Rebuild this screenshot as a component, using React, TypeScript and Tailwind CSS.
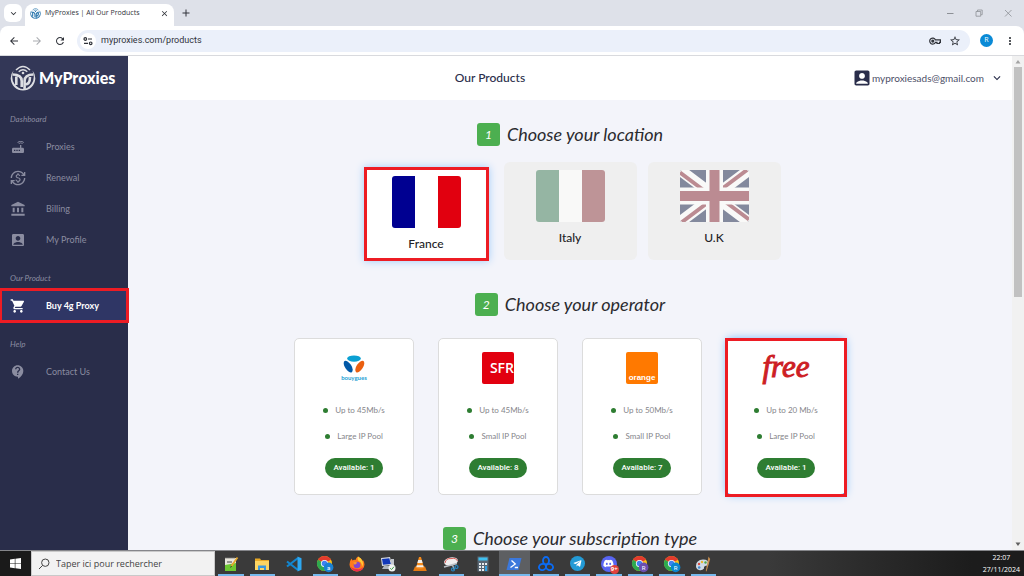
import type { ReactNode } from "react";
import {
  MdAccountBalance,
  MdAccountBox,
  MdArrowBack,
  MdArrowForward,
  MdClose,
  MdContactSupport,
  MdCurrencyExchange,
  MdExpandMore,
  MdMoreVert,
  MdRefresh,
  MdRouter,
  MdShoppingCart,
  MdStarOutline,
} from "react-icons/md";
import { FaDiscord, FaTelegramPlane } from "react-icons/fa";

const sections = [
  {
    label: "Dashboard",
    items: [
      { icon: MdRouter, title: "Proxies", active: false },
      { icon: MdCurrencyExchange, title: "Renewal", active: false },
      { icon: MdAccountBalance, title: "Billing", active: false },
      { icon: MdAccountBox, title: "My Profile", active: false },
    ],
  },
  {
    label: "Our Product",
    items: [{ icon: MdShoppingCart, title: "Buy 4g Proxy", active: true }],
  },
  {
    label: "Help",
    items: [{ icon: MdContactSupport, title: "Contact Us", active: false }],
  },
];

const FranceFlag = () => (
  <svg viewBox="0 0 69 52" className="h-[52px] w-[69px] rounded-[3px]">
    <rect width="69" height="52" fill="#fff" />
    <rect width="23" height="52" fill="#000091" />
    <rect x="46" width="23" height="52" fill="#e1000f" />
  </svg>
);

const ItalyFlag = () => (
  <svg viewBox="0 0 69 52" className="h-[52px] w-[69px] rounded-[3px]">
    <rect width="69" height="52" fill="#f9f9f8" />
    <rect width="23" height="52" fill="#95b5a3" />
    <rect x="46" width="23" height="52" fill="#be9497" />
  </svg>
);

const UkFlag = () => (
  <svg viewBox="0 0 69 52" className="h-[52px] w-[69px] rounded-[2px]">
    <rect width="69" height="52" fill="#83899d" />
    <path d="M0 0L69 52M69 0L0 52" stroke="#f9f9f8" strokeWidth="11" />
    <path
      d="M0 2.500L24 20.500M69 49.500L45 31.500M67 0L43 18M2 52L26 34"
      stroke="#bb8b92"
      strokeWidth="4"
    />
    <path d="M34.500 0V52M0 26H69" stroke="#f9f9f8" strokeWidth="17" />
    <path d="M34.500 0V52M0 26H69" stroke="#bb8b92" strokeWidth="10" />
  </svg>
);

const locations = [
  { flag: FranceFlag, name: "France", selected: true },
  { flag: ItalyFlag, name: "Italy", selected: false },
  { flag: UkFlag, name: "U.K", selected: false },
];

const BouyguesLogo = () => (
  <div className="flex h-8 flex-col items-center">
    <svg viewBox="0 0 24 20" className="mt-[2px] h-5 w-6 shrink-0">
      <ellipse cx="12" cy="4.600" rx="6.800" ry="3.200" fill="#0aa0d3" />
      <ellipse cx="6.200" cy="12.600" rx="3.200" ry="6.600" fill="#0058a7" transform="rotate(-33 6.200 12.600)" />
      <ellipse cx="17.800" cy="12.600" rx="3.200" ry="6.600" fill="#ea5f10" transform="rotate(33 17.800 12.600)" />
    </svg>
    <span className="text-[6px] leading-[8px] font-bold text-[#1e9fd4]">bouygues</span>
  </div>
);

const SfrLogo = () => (
  <div className="flex h-8 w-8 items-center justify-end rounded-[2px] bg-[#e2000f] font-['Open_Sans',sans-serif] text-[14px] leading-none font-semibold text-white">
    SFR
  </div>
);

const OrangeLogo = () => (
  <div className="flex h-8 w-8 items-end justify-center rounded-[2px] bg-[#ff7900] pb-px font-['Liberation_Sans',sans-serif] text-[8px] leading-[10px] font-bold text-white">
    orange
  </div>
);

const FreeLogo = () => (
  <div className="flex h-8 items-center pb-1 font-['Liberation_Serif',serif] text-[31px] leading-none text-[#cd1e25] italic [-webkit-text-stroke:1px_#cd1e25]">
    free
  </div>
);

const operators = [
  { logo: BouyguesLogo, speed: "Up to 45Mb/s", pool: "Large IP Pool", available: 1, selected: false },
  { logo: SfrLogo, speed: "Up to 45Mb/s", pool: "Small IP Pool", available: 8, selected: false },
  { logo: OrangeLogo, speed: "Up to 50Mb/s", pool: "Small IP Pool", available: 7, selected: false },
  { logo: FreeLogo, speed: "Up to 20 Mb/s", pool: "Large IP Pool", available: 1, selected: true },
];

const LogoMark = ({ className }: { className: string }) => (
  <svg viewBox="0 0 26 26" className={className} fill="none">
    <path d="M3.500 5.500A12.300 12.300 0 1 0 22.500 5.500Q25.500 13 21.500 19Q17.500 24 13 24Q8.500 24 4.500 19Q.5 13 3.500 5.500Z" fill="currentColor" />
    <path d="M6 5Q13-2.200 20 5" stroke="currentColor" strokeWidth="1.500" />
    <path d="M8.700 6.700Q13 2.700 17.300 6.700" stroke="currentColor" strokeWidth="1.400" />
    <circle cx="13" cy="8" r="1.300" fill="currentColor" />
    <path d="M2.500 9.500Q11.700 9.500 11.700 16V22M6.300 11.500V20" stroke="currentColor" strokeWidth="2.600" />
    <path d="M23.500 9.500Q14.600 9.500 14.600 16V25M15 19.500Q20 19.500 20 12" stroke="currentColor" strokeWidth="2.600" />
  </svg>
);

const KeyIcon = () => (
  <svg viewBox="0 0 12 12" className="h-3 w-3" fill="none" stroke="currentColor" strokeWidth="1.200">
    <path d="M6.400 4.800A3 3 0 1 0 6.400 7.400H8V8.500H10.500V7.400H11.400V4.800Z" />
    <circle cx="3.800" cy="6.100" r="1" fill="currentColor" />
  </svg>
);

const BrowserChrome = () => (
  <div className="shrink-0 bg-[#dee1e9] font-['Open_Sans','Noto_Sans',sans-serif] text-[#30333a]">
    <div className="flex h-[26px] items-end">
      <button aria-label="Search tabs" className="mb-[4px] ml-1 flex h-[18px] w-[18px] items-center justify-center rounded-md bg-white">
        <MdExpandMore className="h-[11px] w-[11px]" />
      </button>
      <div className="ml-[3px] flex h-[22px] w-[149px] items-center rounded-t-lg bg-white px-[5px] pb-[3px]">
        <LogoMark className="h-[11px] w-[11px] text-[#2c78ae]" />
        <span className="ml-1 flex-1 text-[7px] whitespace-nowrap">MyProxies | All Our Products</span>
        <button aria-label="Close tab">
          <MdClose className="h-[9px] w-[9px]" />
        </button>
      </div>
      <button aria-label="New tab" className="mb-2 ml-[7px]">
        <svg viewBox="0 0 10 10" className="h-[10px] w-[10px]" stroke="currentColor">
          <path d="M5 1.500V8.500M1.500 5H8.500" />
        </svg>
      </button>
      <div className="ml-auto flex h-full items-center gap-[21px] pr-3 text-[#8d9096]">
        <button aria-label="Minimize">
          <svg viewBox="0 0 8 8" className="h-2 w-2" stroke="currentColor">
            <path d="M1 4.500H7.500" />
          </svg>
        </button>
        <button aria-label="Restore">
          <svg viewBox="0 0 8 8" className="h-2 w-2" stroke="currentColor" strokeWidth=".8" fill="none">
            <path d="M1 2.500H5.700V7.200H1ZM2.500 2.400V1H7.200V5.700H6" />
          </svg>
        </button>
        <button aria-label="Close">
          <svg viewBox="0 0 8 8" className="h-2 w-2" stroke="currentColor" strokeWidth=".8">
            <path d="M1 1L7.500 7.500M7.500 1L1 7.500" />
          </svg>
        </button>
      </div>
    </div>
    <div className="flex h-[30px] items-center rounded-t-lg border-b border-[#d9dade] bg-white px-2">
      <button aria-label="Back">
        <MdArrowBack className="h-3 w-3" />
      </button>
      <button aria-label="Forward" className="ml-[11px] text-[#a9abb0]">
        <MdArrowForward className="h-3 w-3" />
      </button>
      <button aria-label="Reload" className="ml-[11px]">
        <MdRefresh className="h-3 w-3" />
      </button>
      <div className="ml-[11px] flex h-[22px] flex-1 items-center rounded-full bg-[#ebf0fa] pr-[9px] pl-[3px]">
        <button aria-label="Site information" className="flex h-4 w-4 items-center justify-center rounded-full bg-white">
          <svg viewBox="0 0 10 10" className="h-[10px] w-[10px]" fill="none" stroke="currentColor" strokeWidth="1.200">
            <circle cx="2.300" cy="3" r="1.300" />
            <path d="M5 3H9M1 7.300H5" />
            <circle cx="7.700" cy="7.300" r="1.300" />
          </svg>
        </button>
        <input
          aria-label="Address"
          defaultValue="myproxies.com/products"
          className="ml-[5px] min-w-0 flex-1 bg-transparent font-['Roboto',sans-serif] text-[9px] outline-none"
        />
        <button aria-label="Passwords">
          <KeyIcon />
        </button>
        <button aria-label="Bookmark" className="ml-2">
          <MdStarOutline className="h-3 w-3" />
        </button>
      </div>
      <button className="ml-[10px] flex h-[13px] w-[13px] items-center justify-center rounded-full bg-[#0a8ad6] text-[7px] text-white">
        R
      </button>
      <button aria-label="Menu" className="ml-[11px]">
        <MdMoreVert className="h-3 w-3" />
      </button>
    </div>
  </div>
);

const Sidebar = () => (
  <aside className="relative z-10 w-32 shrink-0 bg-[#292d4a] text-[#8a8ca0]">
    <a href="#home" className="flex h-11 items-center bg-[#333757] pl-[10px] text-white">
      <LogoMark className="h-[26px] w-[26px] text-[#dcdde2]" />
      <span className="ml-[3px] text-[16px] font-black">MyProxies</span>
    </a>
    <nav className="flex flex-col gap-3 pt-2">
      {sections.map((section) => (
        <div key={section.label}>
          <h3 className="pl-[10px] text-[8px] leading-[23px] italic">{section.label}</h3>
          {section.items.map((item) => (
            <a
              key={item.title}
              href={`#${item.title}`}
              className={`relative flex h-[31px] items-center pl-[10px] text-[9px] ${
                item.active ? "bg-[#2f3665] font-bold text-white" : ""
              }`}
            >
              <item.icon className="h-4 w-4" />
              <span className="ml-5">{item.title}</span>
              {item.active && (
                <span className="pointer-events-none absolute -inset-x-px -inset-y-[2px] border-3 border-[#ed1c24]" />
              )}
            </a>
          ))}
        </div>
      ))}
    </nav>
  </aside>
);

const StepTitle = ({ step, children }: { step: number; children: ReactNode }) => (
  <h2 className="flex items-center justify-center gap-[7px] text-[18px] leading-[23px] text-[#2b2b2f] italic">
    <span className="flex h-[23px] w-[23px] items-center justify-center rounded-[3px] bg-[#4caf50] text-[12px] text-white">
      {step}
    </span>
    {children}
  </h2>
);

const LocationPicker = () => (
  <div className="mt-[16px] flex justify-center gap-[11px]">
    {locations.map((location) => (
      <button
        key={location.name}
        aria-pressed={location.selected}
        className={
          location.selected
            ? "mx-1 mt-[5px] flex w-[125px] flex-col items-center border-3 border-[#ed1c24] bg-white pt-[6px] pb-1 shadow-[0_0_8px_#9fcbfa]"
            : "mb-px flex w-[133px] flex-col items-center rounded-md bg-[#efefef] pt-2 pb-3"
        }
      >
        <location.flag />
        <span className="mt-[6px] text-[12px] leading-5 font-medium text-[#222226]">{location.name}</span>
      </button>
    ))}
  </div>
);

const OperatorPicker = () => (
  <div className="mt-[22px] flex justify-center gap-6">
    {operators.map((operator, index) => (
      <button
        key={index}
        aria-pressed={operator.selected}
        className={`relative flex w-[120px] flex-col items-center rounded-[5px] border bg-white pt-[13px] pb-4 ${
          operator.selected ? "border-[#58aef8] shadow-[0_0_9px_#7dbdfb]" : "border-[#dcdcdc]"
        }`}
      >
        <operator.logo />
        <ul className="mt-[15px] flex flex-col items-center gap-1 text-[8px] leading-[22px] text-[#85858a]">
          {[operator.speed, operator.pool].map((feature) => (
            <li key={feature} className="flex items-center gap-[7px]">
              <span className="h-[5px] w-[5px] rounded-full bg-[#2e7d32]" />
              {feature}
            </li>
          ))}
        </ul>
        <span className="mt-[11px] rounded-full bg-[#2e7d32] px-2 font-['Roboto',sans-serif] text-[8px] leading-5 font-medium text-white">
          Available: {operator.available}
        </span>
        {operator.selected && (
          <span className="pointer-events-none absolute -inset-x-[2px] -top-px -bottom-[3px] border-3 border-[#ed1c24]" />
        )}
      </button>
    ))}
  </div>
);

const ProductsPage = () => (
  <div className="flex min-w-0 flex-1 flex-col">
    <header className="flex h-11 shrink-0 items-center justify-between bg-white pr-2 text-[#292d4a]">
      <div />
      <h1 className="text-[12px] font-medium">Our Products</h1>
      <button className="flex items-center text-[10px]">
        <MdAccountBox className="h-5 w-5" />
        <span className="text-[#4d5068]">myproxiesads@gmail.com</span>
        <MdExpandMore className="ml-[6px] h-[14px] w-[14px]" />
      </button>
    </header>
    <main className="min-h-0 flex-1 overflow-hidden bg-[#f3f4fa] pt-[23px]">
      <StepTitle step={1}>Choose your location</StepTitle>
      <LocationPicker />
      <div className="mt-8">
        <StepTitle step={2}>Choose your operator</StepTitle>
        <OperatorPicker />
      </div>
      <div className="mt-8">
        <StepTitle step={3}>Choose your subscription type</StepTitle>
      </div>
    </main>
  </div>
);

const ScrollBar = () => (
  <div className="flex w-3 shrink-0 flex-col items-center bg-[#f1f1f1] py-1 pr-px">
    <svg viewBox="0 0 6 4" className="h-1 w-[6px]">
      <path d="M3 0L5.500 3.500H.5Z" fill="#a3a3a3" />
    </svg>
    <div className="mt-[3px] h-[230px] w-2 bg-[#c1c1c1]" />
    <svg viewBox="0 0 6 4" className="mt-auto h-1 w-[6px]">
      <path d="M3 4L5.500 .5H.5Z" fill="#606060" />
    </svg>
  </div>
);

const NotepadIcon = () => (
  <svg viewBox="0 0 16 16" className="h-4 w-4">
    <path d="M2 2H13V15H2Z" fill="#e8e6dc" />
    <path d="M3 1V3M5 1V3M7 1V3M9 1V3M11 1V3" stroke="#777" strokeWidth=".8" />
    <path d="M4 6H9" stroke="#444" />
    <path d="M2 9L13 7V15H2Z" fill="#6cc832" />
    <path d="M14.500 1.500L8.500 10" stroke="#e5a72b" strokeWidth="1.800" />
    <path d="M8.500 10L7.600 11.500" stroke="#333" />
  </svg>
);

const FolderIcon = () => (
  <svg viewBox="0 0 16 16" className="h-4 w-4">
    <path d="M1 2.500H6L7 4H15V14H1Z" fill="#e9a925" />
    <path d="M1 5H15V14H1Z" fill="#fcd462" />
    <path d="M4 9.500H12V14H10V12H6V14H4Z" fill="#3a97dd" />
  </svg>
);

const VsCodeIcon = () => (
  <svg viewBox="0 0 16 16" className="h-4 w-4" fill="none">
    <path d="M1 5.500L12 14M1 10.500L12 2" stroke="#1286d0" strokeWidth="2.200" />
    <path d="M11.500 .5L15.500 2.300V13.700L11.500 15.500Z" fill="#2da8f1" />
  </svg>
);

const ChromeIcon = ({ badge, letter }: { badge: string; letter: string }) => (
  <svg viewBox="0 0 18 18" className="h-[18px] w-[18px]">
    <circle cx="8.500" cy="8.500" r="7.500" fill="#fbc116" />
    <path d="M8.500 8.500L2 4.750A7.500 7.500 0 0 1 15 4.750Z" fill="#e33b2e" />
    <path d="M2 4.750A7.500 7.500 0 0 0 8.500 16L11 10L8.500 8.500Z" fill="#2da94f" />
    <circle cx="8.500" cy="8.500" r="3.600" fill="#fff" />
    <circle cx="8.500" cy="8.500" r="2.800" fill="#3e82f1" />
    <circle cx="12.600" cy="12.400" r="4.800" fill={badge} />
    <text x="12.600" y="14.600" textAnchor="middle" fontSize="6" fontFamily="Roboto" fill="#fff">
      {letter}
    </text>
  </svg>
);

const FirefoxIcon = () => (
  <svg viewBox="0 0 16 16" className="h-4 w-4">
    <path d="M9 .5Q12.500 2 13.500 5Q14 4.500 13.800 3.800Q15.500 6 15.500 8.500A7.500 7 0 0 1 .5 8.500Q.5 5 2.500 2.500L3.500 4.500Q5 3.500 6.500 4Q7 1.500 9 .5Z" fill="#ff7a1c" />
    <path d="M9 .5Q12.500 2 13.500 5Q15 8 13 11Q13 6 9.500 5Q8 3 9 .5Z" fill="#ffcb38" />
    <path d="M1 10Q3 15 8 15.400Q13 15.400 14.500 11Q11 14 8 13Q3 13 1 10Z" fill="#ec2b50" />
    <circle cx="8" cy="9" r="3.300" fill="#8346d2" />
    <path d="M4.200 6.500Q7 5.500 8.500 7Q6.500 7.500 6 9Z" fill="#ff9d25" />
  </svg>
);

const RemoteIcon = () => (
  <svg viewBox="0 0 16 16" className="h-4 w-4">
    <path d="M1 2L10 1L12 9L2 10Z" fill="#d9dde3" />
    <path d="M2 3L9.300 2.200L10.800 8L3 8.800Z" fill="#1238b8" />
    <path d="M11 3H14V12H11Z" fill="#c2c6cd" />
    <path d="M4 10H10L11 13H2Z" fill="#aeb4bc" />
    <circle cx="12" cy="12" r="3.500" fill="#f2f4f2" />
    <path d="M10.200 12.300L11.600 13.500L14 10.700" stroke="#3f9d49" fill="none" />
  </svg>
);

const VlcIcon = () => (
  <svg viewBox="0 0 16 16" className="h-4 w-4">
    <path d="M3 10.500H13L14.800 15H1.200Z" fill="#e57b12" />
    <path d="M7 1H9L12 12Q8 14 4 12Z" fill="#f58a1b" />
    <path d="M6.200 4H9.800L10.600 7H5.400ZM4.800 9.300H11.200L11.700 11.300H4.300Z" fill="#f3f0ea" />
  </svg>
);

const SnippingIcon = () => (
  <svg viewBox="0 0 16 16" className="h-4 w-4">
    <ellipse cx="8" cy="5.500" rx="7" ry="4" fill="#f1eeee" transform="rotate(-10 8 5.500)" />
    <path d="M2 7Q3 2 8 2.600Q13 1.500 14.500 5" stroke="#d04b46" strokeWidth=".9" fill="none" />
    <path d="M1 11L14 7.500M9 8L11.500 14" stroke="#b9bec4" strokeWidth="1.300" />
    <circle cx="10" cy="13.500" r="1.500" fill="none" stroke="#2389c9" strokeWidth="1.200" />
    <circle cx="13.500" cy="11" r="1.500" fill="none" stroke="#2389c9" strokeWidth="1.200" />
  </svg>
);

const CalculatorIcon = () => (
  <svg viewBox="0 0 16 16" className="h-4 w-4">
    <rect x="2.500" y=".5" width="11" height="15" fill="#596673" />
    <rect x="3.500" y="1.500" width="9" height="3" fill="#3fc0ef" />
    <path d="M4 7H6V9H4ZM7 7H9V9H7ZM10 7H12V9H10ZM4 10H6V12H4ZM7 10H9V12H7ZM4 13H6V15H4ZM7 13H9V15H7Z" fill="#e9edf0" />
    <path d="M10 10H12V15H10Z" fill="#2f9fe0" />
  </svg>
);

const PowerShellIcon = () => (
  <svg viewBox="0 0 16 16" className="h-4 w-4">
    <path d="M3.500 2H15.500L12.500 14H.5Z" fill="#3b78dc" />
    <path d="M5.500 4.500L9.300 8L4.500 11.500M8.800 11.500H12" stroke="#fff" strokeWidth="1.300" fill="none" />
  </svg>
);

const TrefoilIcon = () => (
  <svg viewBox="0 0 16 16" className="h-4 w-4" fill="none" stroke="#0b6cf5" strokeWidth="1.900">
    <ellipse cx="8" cy="4.700" rx="3" ry="3.700" />
    <ellipse cx="4.500" cy="11" rx="3.600" ry="3" transform="rotate(-20 4.500 11)" />
    <ellipse cx="11.500" cy="11" rx="3.600" ry="3" transform="rotate(20 11.500 11)" />
  </svg>
);

const TelegramIcon = () => (
  <span className="flex h-[15px] w-[15px] items-center justify-center rounded-full bg-[#239ad5] text-white">
    <FaTelegramPlane className="h-[9px] w-[9px]" />
  </span>
);

const DiscordIcon = () => (
  <span className="relative flex h-4 w-4 items-center justify-center rounded-full bg-[#5865f2] text-white">
    <FaDiscord className="h-[11px] w-[11px]" />
    <span className="absolute -right-[2px] -bottom-[2px] flex h-[9px] w-[9px] items-center justify-center rounded-full bg-[#e0413e] text-[6px] font-bold">
      9+
    </span>
  </span>
);

const PaintIcon = () => (
  <svg viewBox="0 0 16 16" className="h-4 w-4">
    <path d="M1 10Q1 4 8 3.500Q14 3.500 13.500 8Q13 10 10 10Q8.500 10.500 9 12.500Q7 15 4 14Q1 13 1 10Z" fill="#cfdbe6" />
    <circle cx="4" cy="8" r="1.200" fill="#d94c41" />
    <circle cx="7" cy="6" r="1.200" fill="#e9b62c" />
    <circle cx="10.500" cy="6.500" r="1.200" fill="#4fa84a" />
    <circle cx="4.200" cy="11.500" r="1.300" fill="#4389cf" />
    <path d="M13.500 .5L15.200 3L11.500 15.500L10.800 15Z" fill="#c98f4e" />
  </svg>
);

const apps = [
  { name: "Notepad++", icon: <NotepadIcon />, open: true },
  { name: "Explorer", icon: <FolderIcon />, open: true },
  { name: "Code", icon: <VsCodeIcon />, open: false },
  { name: "Chrome", icon: <ChromeIcon badge="#1a82d2" letter="a" />, open: true },
  { name: "Firefox", icon: <FirefoxIcon />, open: false },
  { name: "Remote desktop", icon: <RemoteIcon />, open: true },
  { name: "VLC", icon: <VlcIcon />, open: false },
  { name: "Snipping tool", icon: <SnippingIcon />, open: true },
  { name: "Calculator", icon: <CalculatorIcon />, open: false },
  { name: "PowerShell", icon: <PowerShellIcon />, open: true, focused: true },
  { name: "Proxy manager", icon: <TrefoilIcon />, open: true },
  { name: "Telegram", icon: <TelegramIcon />, open: true },
  { name: "Discord", icon: <DiscordIcon />, open: true },
  { name: "Chrome work", icon: <ChromeIcon badge="#6b4fb0" letter="R" />, open: true },
  { name: "Chrome home", icon: <ChromeIcon badge="#0a86d0" letter="R" />, open: true },
  { name: "Paint", icon: <PaintIcon />, open: true },
];

const Taskbar = () => (
  <footer className="flex h-[26px] shrink-0 border-t border-[#85868a] bg-linear-to-r from-[#3a3a3a] from-75% to-[#1c1c1c] to-95% font-['Open_Sans',sans-serif]">
    <button aria-label="Start" className="flex w-[31px] items-center justify-center bg-[#1a1a1a]">
      <svg viewBox="0 0 11 11" className="h-[11px] w-[11px]" fill="#fff">
        <path d="M0 1.500L4.800 .8V5.200H0ZM5.400 .7L11 0V5.200H5.400ZM0 5.800H4.800V10.200L0 9.500ZM5.400 5.800H11V11L5.400 10.300Z" />
      </svg>
    </button>
    <label className="flex w-[184px] items-center border border-[#c9c9c9] bg-[#f2f2f2] pl-[6px] text-[#444]">
      <svg viewBox="0 0 12 12" className="h-3 w-3" fill="none" stroke="currentColor">
        <circle cx="7.300" cy="4.700" r="3.700" />
        <path d="M4.600 7.400L1 11" />
      </svg>
      <input
        aria-label="Taper ici pour rechercher"
        placeholder="Taper ici pour rechercher"
        className="ml-[6px] min-w-0 flex-1 bg-transparent text-[9px] outline-none placeholder:text-[#444]"
      />
    </label>
    <div className="flex w-[504px]">
      {apps.map((app) => (
        <button
          key={app.name}
          aria-label={app.name}
          className={`relative flex flex-1 items-center justify-center ${app.focused ? "bg-[#5d5f62]" : ""}`}
        >
          {app.icon}
          {app.open && (
            <span className={`absolute bottom-0 h-[2px] bg-[#76b9ed] ${app.focused ? "inset-x-0" : "inset-x-[3px]"}`} />
          )}
        </button>
      ))}
    </div>
    <div className="ml-auto flex flex-col items-center justify-center pr-1 text-[7px] leading-3 text-white">
      <span>22:07</span>
      <span>27/11/2024</span>
    </div>
  </footer>
);

export default function App() {
  return (
    <div className="flex h-screen flex-col overflow-hidden font-['Lato',sans-serif]">
      <BrowserChrome />
      <div className="flex min-h-0 flex-1">
        <Sidebar />
        <ProductsPage />
        <ScrollBar />
      </div>
      <Taskbar />
    </div>
  );
}
